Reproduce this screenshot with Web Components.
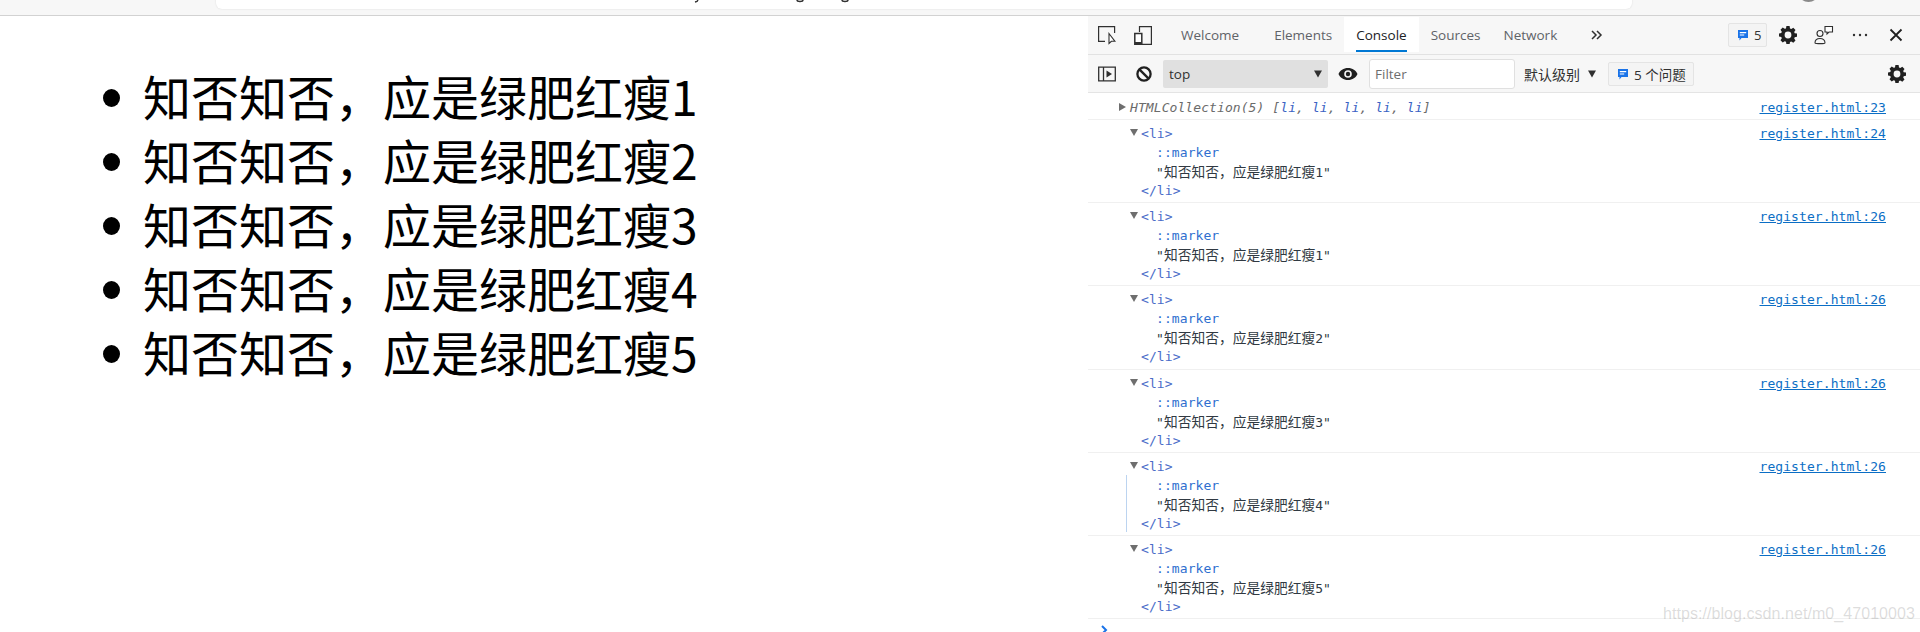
<!DOCTYPE html>
<html lang="zh">
<head>
<meta charset="utf-8">
<title>register.html</title>
<style>
    html, body { margin: 0; height: 100%; overflow: hidden; background: #fff; }
    body { display: flex; flex-direction: column; }
</style>
</head>
<body>
<browser-strip></browser-strip>
<page-split>
    <poem-list slot="page"></poem-list>
    <dev-tools slot="tools"></dev-tools>
</page-split>

<script>
// shared icon strings
var ICONS = {
    gear: `<svg width="18" height="18" viewBox="0 0 18 18"><path fill="#202020" fill-rule="evenodd" d="M7.400 1h3.200l.4 2.300 1.300.6 2-1.300 2.200 2.300-1.300 1.900.5 1.300 2.300.4v3.200l-2.300.4-.5 1.300 1.300 2-2.200 2.200-2-1.300-1.300.5-.4 2.300H7.400L7 16.600l-1.300-.5-2 1.300-2.200-2.200 1.300-2-.5-1.300L0 11.500V8.300l2.300-.4.5-1.300-1.300-1.900 2.200-2.300 2 1.300L7 3.300zM9 6.500a3.400 3.400 0 1 0 0 6.800 3.400 3.400 0 0 0 0-6.800z" transform="translate(0 -.9)"/></svg>`,
    flag: `<svg width="14" height="14" viewBox="0 0 14 14"><path fill="#1a73e8" d="M2 2h10v8H5.500L3.500 12.500V10H2z"/><path stroke="#fff" stroke-width="1.100" d="M3.800 4.600h6.400M3.800 7h4.400"/></svg>`
};

class BrowserStrip extends HTMLElement {
    constructor(){
        super();
        this.attachShadow({mode:"open"});
        this.shadowRoot.innerHTML = `
        <style>
            :host { display: block; flex: none; height: 16px; box-sizing: border-box; background: #f7f7f7; border-bottom: 1px solid #d2d2d2; position: relative; overflow: hidden; }
            .omnibox { position: absolute; left: 216px; top: -10px; width: 1416px; height: 19px; background: #fff; border-radius: 6px; box-shadow: 0 0 2px rgba(0,0,0,.12); }
            .avatar { position: absolute; left: 1798px; top: -18px; width: 21px; height: 20px; border-radius: 50%; background: #8a8a8a; }
            .tails { position: absolute; left: 690px; top: 0; }
        </style>
        <div class="omnibox"></div>
        <svg class="tails" width="175" height="4" viewBox="0 0 175 4" fill="none" stroke="#333" stroke-width="1.400"><path d="M8 0l-1 1.500-2 .5M113 0c0 2-6 2-6 0M158 0c0 2-6 2-6 0"/></svg>
        <div class="avatar"></div>`;
    }
}

class PageSplit extends HTMLElement {
    constructor(){
        super();
        this.attachShadow({mode:"open"});
        this.shadowRoot.innerHTML = `
        <style>
            :host { display: grid; grid-template-columns: 1088px 832px; flex: 1; min-height: 0; overflow: hidden; }
        </style>
        <slot name="page"></slot>
        <slot name="tools"></slot>`;
    }
}

class PoemList extends HTMLElement {
    constructor(){
        super();
        this.attachShadow({mode:"open"});
        var items = [1,2,3,4,5].map(n => `<li>知否知否，应是绿肥红瘦${n}</li>`).join("");
        this.shadowRoot.innerHTML = `
        <style>
            :host { display: block; padding: 47px 0 0 103px; font-family: "Noto Sans CJK SC", "Liberation Sans", sans-serif; font-size: 48px; line-height: 64px; color: #000; }
            ul { margin: 0; padding: 0; list-style: none; }
            li { display: flex; align-items: center; }
            li::before { content: ""; flex: none; width: 17px; height: 18px; margin: 5px 23px 0 0; border-radius: 50%; background: #000; }
        </style>
        <ul>${items}</ul>`;
    }
}

class DevTools extends HTMLElement {
    constructor(){
        super();
        this.attachShadow({mode:"open"});
        this.shadowRoot.innerHTML = `
        <style>
            :host { display: flex; flex-direction: column; min-height: 0; overflow: hidden; position: relative; background: #fff; }
            .mark { position: absolute; left: 575px; top: 589px; font: 16px "Liberation Sans", sans-serif; letter-spacing: .06px; color: rgba(120,120,120,.26); white-space: nowrap; }
        </style>
        <dev-tabs></dev-tabs>
        <console-bar></console-bar>
        <console-row source="register.html:23" kind="collection"></console-row>
        <console-row source="register.html:24" value="1"></console-row>
        <console-row source="register.html:26" value="1"></console-row>
        <console-row source="register.html:26" value="2"></console-row>
        <console-row source="register.html:26" value="3"></console-row>
        <console-row source="register.html:26" value="4" guide></console-row>
        <console-row source="register.html:26" value="5"></console-row>
        <console-prompt></console-prompt>
        <div class="mark">https://blog.csdn.net/m0_47010003</div>`;
    }
}

class DevTabs extends HTMLElement {
    constructor(){
        super();
        this.attachShadow({mode:"open"});
        this.shadowRoot.innerHTML = `
        <style>
            :host { display: flex; flex: none; align-items: stretch; height: 39px; box-sizing: border-box; background: #f7f7f7; border-bottom: 1px solid #e2e2e2; font: 13.500px "Open Sans", "Noto Sans", sans-serif; color: #5f6368; }
            .icons { display: flex; align-items: center; gap: 18px; padding-left: 10px; width: 84px; box-sizing: border-box; }
            svg { display: block; flex: none; }
            .tab { display: flex; align-items: center; position: relative; white-space: nowrap; }
            .tab.on { background: #fff; color: #202124; margin: 1px 0 2px; padding: 0 12px; }
            .tab.on::after { content: ""; position: absolute; left: 12px; right: 12px; bottom: 0; height: 2px; background: #0078d4; }
            .chev { margin-left: 34px; align-self: center; }
            .right { margin-left: auto; display: flex; align-items: center; padding-right: 6px; }
            .count { display: flex; align-items: center; gap: 4px; height: 24px; width: 39px; box-sizing: border-box; padding-left: 7px; background: #f4f4f4; border: 1px solid #e4e4e4; border-radius: 2px; font-size: 13px; color: #333; margin-right: 3px; }
            .slot { display: flex; justify-content: center; width: 36px; }
        </style>
        <div class="icons">
            <svg width="18" height="19" viewBox="0 0 18 19" fill="none"><path stroke="#303030" stroke-width="1.200" d="M7 15.300H.6V.6h16V7"/><path fill="#fff" stroke="#303030" stroke-width="1.100" d="M11 7.500v10l2.400-2.200h3.600z"/></svg>
            <svg width="18" height="19" viewBox="0 0 18 19" fill="none"><path stroke="#303030" stroke-width="1.200" d="M5.500 6V.6h11.900v17.800H8"/><rect x=".8" y="7.500" width="7" height="11" fill="#fff" stroke="#303030" stroke-width="1.500"/><path stroke="#303030" stroke-width="2" d="M1 17h6.500"/></svg>
        </div>
        <div class="tab" style="padding:0 35px 0 9px">Welcome</div>
        <div class="tab" style="padding-right:12px">Elements</div>
        <div class="tab on">Console</div>
        <div class="tab" style="padding:0 23px 0 12px">Sources</div>
        <div class="tab">Network</div>
        <svg class="chev" width="12" height="10" viewBox="0 0 12 10" fill="none" stroke="#303030" stroke-width="1.500"><path d="M1 1l4 4-4 4M6 1l4 4-4 4"/></svg>
        <div class="right">
            <div class="count">${ICONS.flag}<span>5</span></div>
            <span class="slot">${ICONS.gear}</span>
            <span class="slot"><svg width="20" height="20" viewBox="0 0 20 20" fill="none" stroke="#303030" stroke-width="1.100"><circle cx="6" cy="8.500" r="3"/><path d="M1 18c0-2.800 2-4.500 5-4.500s5 1.700 5 4.500c0 1-10 1-10 0z"/><path d="M11 1.500h7.500v5.500H15l-2 2V7h-2z" fill="#fff"/></svg></span>
            <span class="slot"><svg width="18" height="4" viewBox="0 0 18 4" fill="#303030"><circle cx="3" cy="2" r="1.200"/><circle cx="9" cy="2" r="1.200"/><circle cx="15" cy="2" r="1.200"/></svg></span>
            <span class="slot"><svg width="14" height="14" viewBox="0 0 14 14" stroke="#202020" stroke-width="1.800"><path d="M1.500 1.500l11 11M12.500 1.500l-11 11"/></svg></span>
        </div>`;
    }
}

class ConsoleBar extends HTMLElement {
    constructor(){
        super();
        this.attachShadow({mode:"open"});
        this.shadowRoot.innerHTML = `
        <style>
            :host { display: flex; flex: none; align-items: center; height: 38px; box-sizing: border-box; background: #f7f7f7; border-bottom: 1px solid #e4e4e4; font: 13px "Open Sans", "Noto Sans CJK SC", sans-serif; color: #303030; }
            svg { display: block; flex: none; }
            .side { margin-left: 10px; }
            .stop { margin-left: 20px; }
            .select { margin-left: 11px; width: 165px; height: 28px; box-sizing: border-box; background: #e0e0e0; border-radius: 2px; display: flex; align-items: center; padding: 0 6px; font-size: 13.500px; }
            .select svg { margin-left: auto; margin-right: -1px; }
            .eye { margin-left: 10px; }
            .filter { margin-left: 11px; width: 146px; height: 30px; box-sizing: border-box; background: #fff; border: 1px solid #e0e0e0; border-radius: 3px; display: flex; align-items: center; padding-left: 5px; color: #6e6e6e; font-size: 13.500px; }
            .level { margin-left: 9px; display: flex; align-items: center; gap: 7px; font-family: "Noto Sans CJK SC", sans-serif; font-size: 14px; }
            .issues { margin-left: 11px; width: 86px; height: 24px; box-sizing: border-box; background: #f4f4f4; border: 1px solid #e4e4e4; border-radius: 2px; display: flex; align-items: center; gap: 4px; padding-left: 7px; font-size: 13.500px; white-space: nowrap; }
            .gear { margin-left: auto; margin-right: 14px; }
        </style>
        <svg class="side" width="18" height="16" viewBox="0 0 18 16" fill="none"><path stroke="#303030" stroke-width="1.300" d="M.7 1.200h16.600v13.600H.7zM5.500 1.200v13.600"/><path fill="#303030" d="M8.500 4.500l5.500 3.500-5.500 3.500z"/></svg>
        <svg class="stop" width="16" height="16" viewBox="0 0 16 16" fill="none" stroke="#202020" stroke-width="2.300"><circle cx="8" cy="8" r="6.600"/><path d="M3.400 3.400l9.200 9.200"/></svg>
        <div class="select"><span>top</span><svg width="10" height="8" viewBox="0 0 10 8"><path fill="#303030" d="M1 .5h8L5 7.500z"/></svg></div>
        <svg class="eye" width="20" height="14" viewBox="0 0 20 14"><path fill="#202020" fill-rule="evenodd" d="M10 1C5.500 1 2 3.500.5 7 2 10.500 5.500 13 10 13s8-2.500 9.500-6C18 3.500 14.500 1 10 1zm0 2.200a3.800 3.800 0 1 1 0 7.600 3.800 3.800 0 0 1 0-7.600z"/><circle cx="10" cy="7" r="2.200" fill="#202020"/></svg>
        <div class="filter">Filter</div>
        <div class="level"><span>默认级别</span><svg width="10" height="8" viewBox="0 0 10 8"><path fill="#303030" d="M1 .5h8L5 7.500z"/></svg></div>
        <div class="issues">${ICONS.flag}<span>5 个问题</span></div>
        <span class="gear">${ICONS.gear}</span>`;
    }
}

class ConsoleRow extends HTMLElement {
    constructor(){
        super();
        this.attachShadow({mode:"open"});
    }
    connectedCallback(){
        var src = this.getAttribute("source");
        var head = `<a>${src}</a>`;
        var body;
        if (this.getAttribute("kind") == "collection") {
            body = `<div class="line coll"><i class="arr right"></i><em>HTMLCollection(5) [<b>li</b>, <b>li</b>, <b>li</b>, <b>li</b>, <b>li</b>]</em>${head}</div>`;
        } else {
            var guide = this.hasAttribute("guide") ? `<div class="guide"></div>` : "";
            body = `<div class="line"><i class="arr down"></i><span class="tag">&lt;li&gt;</span>${head}</div>
                ${guide}
                <div class="line in mk">::marker</div>
                <div class="line in txt">"<span class="cjk">知否知否，应是绿肥红瘦</span>${this.getAttribute("value")}"</div>
                <div class="line"><span class="tag">&lt;/li&gt;</span></div>`;
        }
        this.shadowRoot.innerHTML = `
        <style>
            :host { display: block; flex: none; position: relative; box-sizing: border-box; height: 83.200px; border-bottom: 1px solid #f0f0f0; padding: 4px 0 0 53px; font: 13px/19px "DejaVu Sans Mono", "Liberation Mono", monospace; letter-spacing: .08px; color: #303942; }
            :host([kind]) { padding: 5px 0 0 42px; height: 27px; }
            .line { position: relative; height: 19px; white-space: nowrap; }
            .coll { color: #6b6b6b; }
            em { font-style: italic; }
            b { font-weight: normal; color: #3b63c4; }
            .in { padding-left: 15px; }
            .mk { color: #2f6fcf; }
            .tag { color: #4a6cc8; }
            .cjk { font-family: "Noto Sans CJK SC", sans-serif; font-size: 13.750px; letter-spacing: 0; }
            a { position: absolute; right: 34px; top: 0; color: #0b6ec5; text-decoration: underline; }
            .arr { position: absolute; width: 0; height: 0; border-style: solid; border-color: transparent; }
            .arr.down { left: -11px; top: 5px; border-width: 7px 4.500px 0; border-top-color: #6e6e6e; }
            .arr.right { left: -11px; top: 5px; border-width: 4.500px 0 4.500px 7px; border-left-color: #6e6e6e; }
            .guide { position: absolute; left: 38px; top: 22px; width: 1px; height: 57px; background: #bcd4f0; }
        </style>
        ${body}`;
    }
}

class ConsolePrompt extends HTMLElement {
    constructor(){
        super();
        this.attachShadow({mode:"open"});
        this.shadowRoot.innerHTML = `
        <style>
            :host { display: block; flex: none; padding: 6px 0 0 12px; }
            svg { display: block; }
        </style>
        <svg width="8" height="10" viewBox="0 0 8 10" fill="none" stroke="#1a73e8" stroke-width="2"><path d="M2 1l4 4-4 4"/></svg>`;
    }
}

customElements.define("browser-strip", BrowserStrip);
customElements.define("page-split", PageSplit);
customElements.define("poem-list", PoemList);
customElements.define("dev-tabs", DevTabs);
customElements.define("console-bar", ConsoleBar);
customElements.define("console-row", ConsoleRow);
customElements.define("console-prompt", ConsolePrompt);
customElements.define("dev-tools", DevTools);
</script>
</body>
</html>
